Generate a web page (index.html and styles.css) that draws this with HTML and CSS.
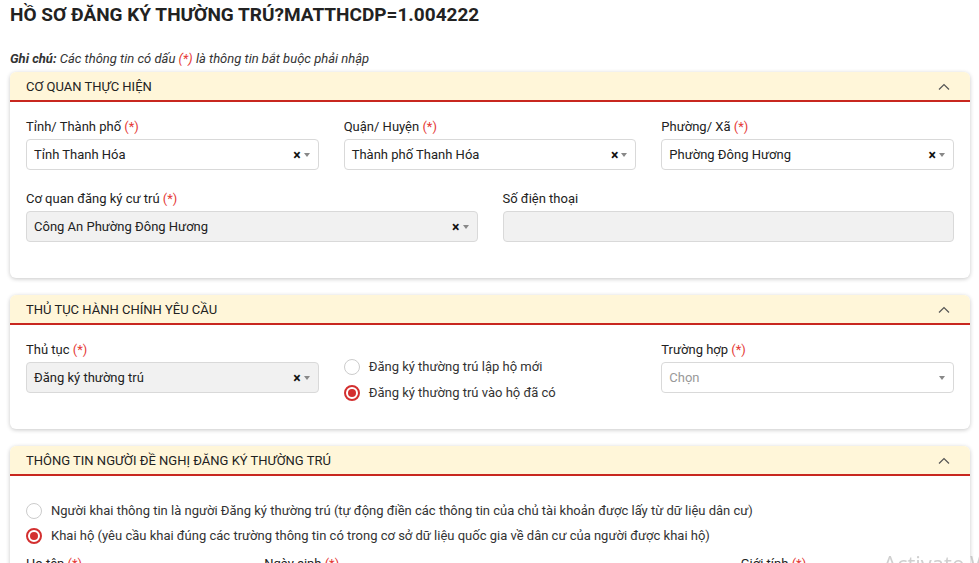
FILE: index.html
```html
<!DOCTYPE html>
<html>
<head>
    <meta charset="utf-8">
    <title>Hồ sơ đăng ký thường trú</title>
    <link rel="stylesheet" href="styles.css">
</head>
<body>
    <div class="page">
        <h1 class="page-title">HỒ SƠ ĐĂNG KÝ THƯỜNG TRÚ?MATTHCDP=1.004222</h1>
        <p class="note"><b>Ghi chú:</b> Các thông tin có dấu <span class="req">(*)</span> là thông tin bắt buộc phải nhập</p>

        <div class="card">
            <div class="card-head">
                <span>CƠ QUAN THỰC HIỆN</span>
                <svg class="chevron" width="12" height="7" viewBox="0 0 12 7"><path d="M1 6.5 L6 1.5 L11 6.5" fill="none" stroke="#555" stroke-width="1.2"/></svg>
            </div>
            <div class="card-body">
                <div class="grid">
                    <div class="field col-4">
                        <label>Tỉnh/ Thành phố <span class="req">(*)</span></label>
                        <div class="select">
                            <span class="value">Tỉnh Thanh Hóa</span>
                            <span class="clear">×</span><span class="arrow"></span>
                        </div>
                    </div>
                    <div class="field col-4">
                        <label>Quận/ Huyện <span class="req">(*)</span></label>
                        <div class="select">
                            <span class="value">Thành phố Thanh Hóa</span>
                            <span class="clear">×</span><span class="arrow"></span>
                        </div>
                    </div>
                    <div class="field col-4">
                        <label>Phường/ Xã <span class="req">(*)</span></label>
                        <div class="select">
                            <span class="value">Phường Đông Hương</span>
                            <span class="clear">×</span><span class="arrow"></span>
                        </div>
                    </div>
                    <div class="field col-6">
                        <label>Cơ quan đăng ký cư trú <span class="req">(*)</span></label>
                        <div class="select disabled">
                            <span class="value">Công An Phường Đông Hương</span>
                            <span class="clear">×</span><span class="arrow"></span>
                        </div>
                    </div>
                    <div class="field col-6">
                        <label>Số điện thoại</label>
                        <div class="input disabled"></div>
                    </div>
                </div>
            </div>
        </div>

        <div class="card">
            <div class="card-head">
                <span>THỦ TỤC HÀNH CHÍNH YÊU CẦU</span>
                <svg class="chevron" width="12" height="7" viewBox="0 0 12 7"><path d="M1 6.5 L6 1.5 L11 6.5" fill="none" stroke="#555" stroke-width="1.2"/></svg>
            </div>
            <div class="card-body">
                <div class="grid">
                    <div class="field col-4">
                        <label>Thủ tục <span class="req">(*)</span></label>
                        <div class="select disabled">
                            <span class="value">Đăng ký thường trú</span>
                            <span class="clear">×</span><span class="arrow"></span>
                        </div>
                    </div>
                    <div class="field col-4 radio-group">
                        <div class="radio"><span class="dot"></span>Đăng ký thường trú lập hộ mới</div>
                        <div class="radio"><span class="dot checked"></span>Đăng ký thường trú vào hộ đã có</div>
                    </div>
                    <div class="field col-4">
                        <label>Trường hợp <span class="req">(*)</span></label>
                        <div class="select">
                            <span class="value placeholder">Chọn</span>
                            <span class="arrow"></span>
                        </div>
                    </div>
                </div>
            </div>
        </div>

        <div class="card">
            <div class="card-head">
                <span>THÔNG TIN NGƯỜI ĐỀ NGHỊ ĐĂNG KÝ THƯỜNG TRÚ</span>
                <svg class="chevron" width="12" height="7" viewBox="0 0 12 7"><path d="M1 6.5 L6 1.5 L11 6.5" fill="none" stroke="#555" stroke-width="1.2"/></svg>
            </div>
            <div class="card-body body-applicant">
                <div class="radio"><span class="dot"></span>Người khai thông tin là người Đăng ký thường trú (tự động điền các thông tin của chủ tài khoản được lấy từ dữ liệu dân cư)</div>
                <div class="radio"><span class="dot checked"></span>Khai hộ (yêu cầu khai đúng các trường thông tin có trong cơ sở dữ liệu quốc gia về dân cư của người được khai hộ)</div>
                <div class="grid person-row">
                    <div class="field col-3"><label>Họ tên <span class="req">(*)</span></label></div>
                    <div class="field col-6"><label>Ngày sinh <span class="req">(*)</span></label></div>
                    <div class="field col-3"><label>Giới tính <span class="req">(*)</span></label></div>
                </div>
            </div>
        </div>
    </div>
    <div class="watermark">Activate Windows</div>
</body>
</html>
```

FILE: styles.css
```css
body {
    font-family: Roboto, "Liberation Sans", sans-serif;
    color: #333;
    background-color: #fff;
    margin: 0;
    padding: 0;
    font-size: 13px;
}

.page {
    padding: 0 9px 0 10px;
}

.page-title {
    font-size: 19px;
    font-weight: 700;
    line-height: 24px;
    margin: 0;
    padding-top: 3px;
    color: #222;
}

.note {
    font-style: italic;
    margin: 24px 0 5px;
    line-height: 16px;
}

.req {
    color: #e53935;
}

.card {
    border-radius: 6px;
    box-shadow: 0 1px 4px rgba(0, 0, 0, 0.22);
    margin-bottom: 17px;
    background-color: #fff;
}

.card-head {
    display: flex;
    align-items: center;
    justify-content: space-between;
    height: 28px;
    padding: 0 20px 0 16px;
    background-color: #fff6d9;
    border-bottom: 2px solid #c8271f;
    border-radius: 6px 6px 0 0;
    font-size: 13px;
    color: #222;
}

.card-body {
    padding: 17px 16px 36px;
}

.grid {
    display: grid;
    grid-template-columns: repeat(12, 1fr);
    column-gap: 25px;
    row-gap: 21px;
}

.col-3 { grid-column: span 3; }
.col-4 { grid-column: span 4; }
.col-6 { grid-column: span 6; }

.field label {
    display: block;
    line-height: 16px;
    margin-bottom: 4px;
    color: #222;
}

.select,
.input {
    height: 31px;
    box-sizing: border-box;
    border: 1px solid #d9d9d9;
    border-radius: 4px;
    display: flex;
    align-items: center;
    padding: 0 8px 0 7px;
    background-color: #fff;
}

.disabled {
    background-color: #f1f1f1;
}

.select .value {
    flex: 1;
    font-size: 13px;
    color: #222;
}

.select .placeholder {
    color: #999;
}

.select .clear {
    font-weight: 700;
    font-size: 14px;
    color: #111;
    margin-right: 3px;
}

.select .arrow {
    width: 0;
    height: 0;
    border-left: 3.5px solid transparent;
    border-right: 3.5px solid transparent;
    border-top: 4px solid #888;
}

.radio-group {
    padding-top: 17px;
    margin-bottom: -9px;
}

.radio-group .radio:last-child {
    margin-bottom: 0;
}

.radio {
    display: flex;
    align-items: center;
    line-height: 16px;
    margin-bottom: 10px;
    color: #333;
}

.radio .dot {
    width: 16px;
    height: 16px;
    box-sizing: border-box;
    border: 1px solid #ccc;
    border-radius: 50%;
    margin-right: 9px;
    flex-shrink: 0;
    position: relative;
}

.radio .dot.checked {
    border: 2px solid #d32f2f;
}

.radio .dot.checked::after {
    content: "";
    position: absolute;
    left: 2px;
    top: 2px;
    width: 8px;
    height: 8px;
    border-radius: 50%;
    background-color: #d32f2f;
}

.body-applicant {
    padding-top: 27px;
}

.body-applicant > .radio {
    margin-bottom: 9px;
}

.person-row {
    margin-top: 12px;
}

.watermark {
    position: fixed;
    left: 883px;
    top: 548px;
    font-size: 22px;
    color: rgba(160, 160, 160, 0.5);
    white-space: nowrap;
    font-family: "Open Sans", sans-serif;
}
```
